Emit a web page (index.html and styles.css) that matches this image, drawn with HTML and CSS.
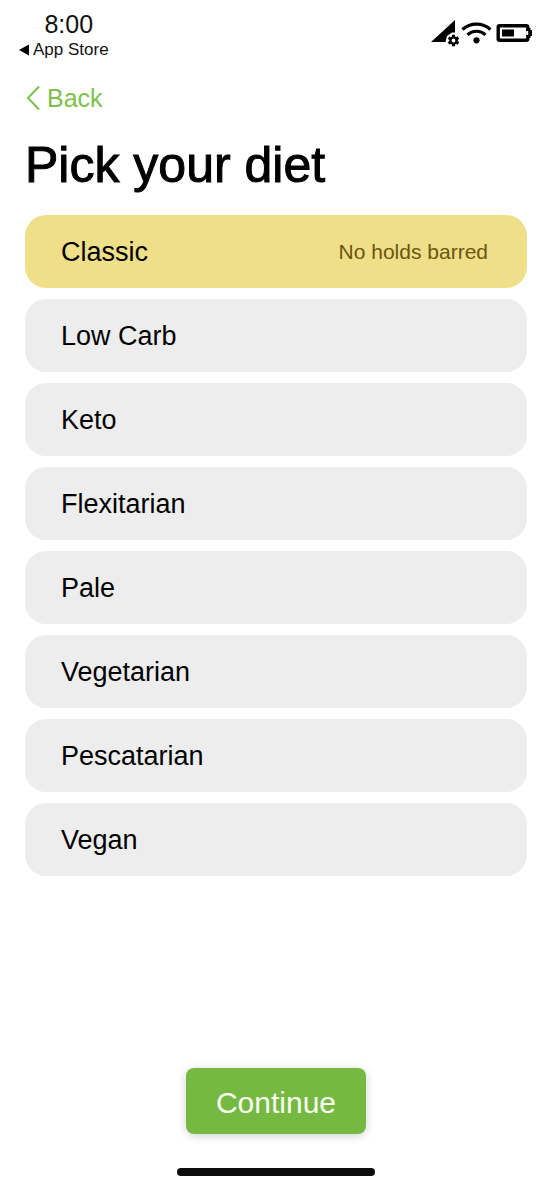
FILE: index.html
```html
<!DOCTYPE html>
<html lang="en">
<head>
<meta charset="utf-8">
<meta name="viewport" content="width=device-width, initial-scale=1">
<title>Pick your diet</title>
<link rel="stylesheet" href="styles.css">
</head>
<body>
<div class="screen">
  <header class="status">
    <div class="status-left">
      <time class="clock">8:00</time>
      <a class="return-link" href="#">
        <svg width="10" height="12" viewBox="0 0 10 12" aria-hidden="true"><path d="M0 6 10 0.5v11z" fill="#000"/></svg>
        <span>App Store</span>
      </a>
    </div>
    <svg class="status-icons" width="101" height="28" viewBox="0 0 101 28" aria-hidden="true">
      <path d="M0 22 24 0v12.500h-3l-5 3.500-1.500 6z" fill="#000"/>
      <g fill="none" stroke="#000">
        <circle cx="22.500" cy="20.500" r="3.100" stroke-width="2.400"/>
        <path d="M22.500 14.700v2.500M22.500 23.800v2.500M17.500 17.600l2.100 1.200M25.400 22.200l2.100 1.200M17.500 23.400l2.100-1.200M25.400 18.800l2.100-1.200" stroke-width="3"/>
        <path d="M31.500 9.500a21 21 0 0 1 28 0" stroke-width="3.200"/>
        <path d="M36.500 14.800a13.200 13.200 0 0 1 18 0" stroke-width="3.200"/>
        <rect x="67.200" y="5.700" width="29.600" height="14.600" rx="1.500" stroke-width="3.400"/>
      </g>
      <circle cx="45.500" cy="20.300" r="3.100" fill="#000"/>
      <path d="M71 9.500h12v7H71zM96 8h3.500v2h1.500v6h-1.500v2H96z" fill="#000"/>
      <path d="M95.200 11h2v4h-2z" fill="#fff"/>
    </svg>
  </header>

  <a class="back" href="#">
    <svg width="15" height="26" viewBox="0 0 15 26" aria-hidden="true"><path d="M14 1.500 3 13 14 24.500" fill="none" stroke="#7fbf4d" stroke-width="2"/></svg>
    <span>Back</span>
  </a>

  <main class="content">
    <h1 class="title">Pick your diet</h1>
    <form class="form">
      <div class="options" role="radiogroup" aria-label="Diet">
        <label class="option"><input class="radio" type="radio" name="diet" checked><span>Classic</span><span class="note">No holds barred</span></label>
        <label class="option"><input class="radio" type="radio" name="diet"><span>Low Carb</span></label>
        <label class="option"><input class="radio" type="radio" name="diet"><span>Keto</span></label>
        <label class="option"><input class="radio" type="radio" name="diet"><span>Flexitarian</span></label>
        <label class="option"><input class="radio" type="radio" name="diet"><span>Pale</span></label>
        <label class="option"><input class="radio" type="radio" name="diet"><span>Vegetarian</span></label>
        <label class="option"><input class="radio" type="radio" name="diet"><span>Pescatarian</span></label>
        <label class="option"><input class="radio" type="radio" name="diet"><span>Vegan</span></label>
      </div>
      <button class="continue" type="button">Continue</button>
    </form>
  </main>
  <div class="home-bar"></div>
</div>
</body>
</html>
```

FILE: styles.css
```css
* {
  box-sizing: border-box;
}

body {
  margin: 0;
  background: #fff;
  color: #000;
  font-family: "Liberation Sans", Arial, sans-serif;
}

.screen {
  display: flex;
  flex-direction: column;
  min-height: 100vh;
  padding: 8px 29px 24px 25px;
}

.status {
  display: flex;
  justify-content: space-between;
  align-items: flex-start;
  margin-left: -6px;
}

.status-left {
  display: flex;
  flex-direction: column;
  align-items: center;
}

.clock {
  padding-left: 10px;
  font-size: 25px;
  line-height: 32px;
  color: #111;
}

.return-link {
  display: flex;
  align-items: center;
  gap: 4px;
  font-size: 17px;
  line-height: 20px;
  color: #111;
  text-decoration: none;
}

.status-icons {
  margin: 12px -5px 0 0;
}

.back {
  display: flex;
  align-items: center;
  align-self: flex-start;
  gap: 7px;
  margin-top: 24px;
  font-size: 25px;
  line-height: 28px;
  color: #7fbf4d;
  text-decoration: none;
}

.content,
.form {
  display: flex;
  flex-direction: column;
  flex: 1;
}

.title {
  margin: 23px 0 20px;
  font-size: 50px;
  line-height: 60px;
  font-weight: 400;
  -webkit-text-stroke: 1px #000;
}

.options {
  display: flex;
  flex-direction: column;
  gap: 11px;
}

.option {
  display: flex;
  justify-content: space-between;
  align-items: center;
  min-height: 73px;
  padding: 0 39px 0 36px;
  border-radius: 21px;
  background: #ededed;
  font-size: 27px;
  line-height: 32px;
  cursor: pointer;
}

.option:has(.radio:checked) {
  background: #f0df89;
}

.option:has(.radio:focus-visible) {
  outline: 2px solid #75b943;
}

.radio {
  position: absolute;
  margin: 0;
  opacity: 0;
}

.note {
  font-size: 21px;
  color: #6b5510;
}

.continue {
  align-self: center;
  min-height: 66px;
  margin-top: auto;
  padding: 4px 30px 0;
  border: 0;
  border-radius: 8px;
  background: #75b943;
  box-shadow: 0 2px 10px rgba(0, 0, 0, 0.18);
  color: #f8fff0;
  font-family: inherit;
  font-size: 30px;
  line-height: 36px;
}

.home-bar {
  align-self: center;
  width: 198px;
  height: 8px;
  margin-top: 34px;
  border-radius: 4px;
  background: #0d0d0d;
}
```
